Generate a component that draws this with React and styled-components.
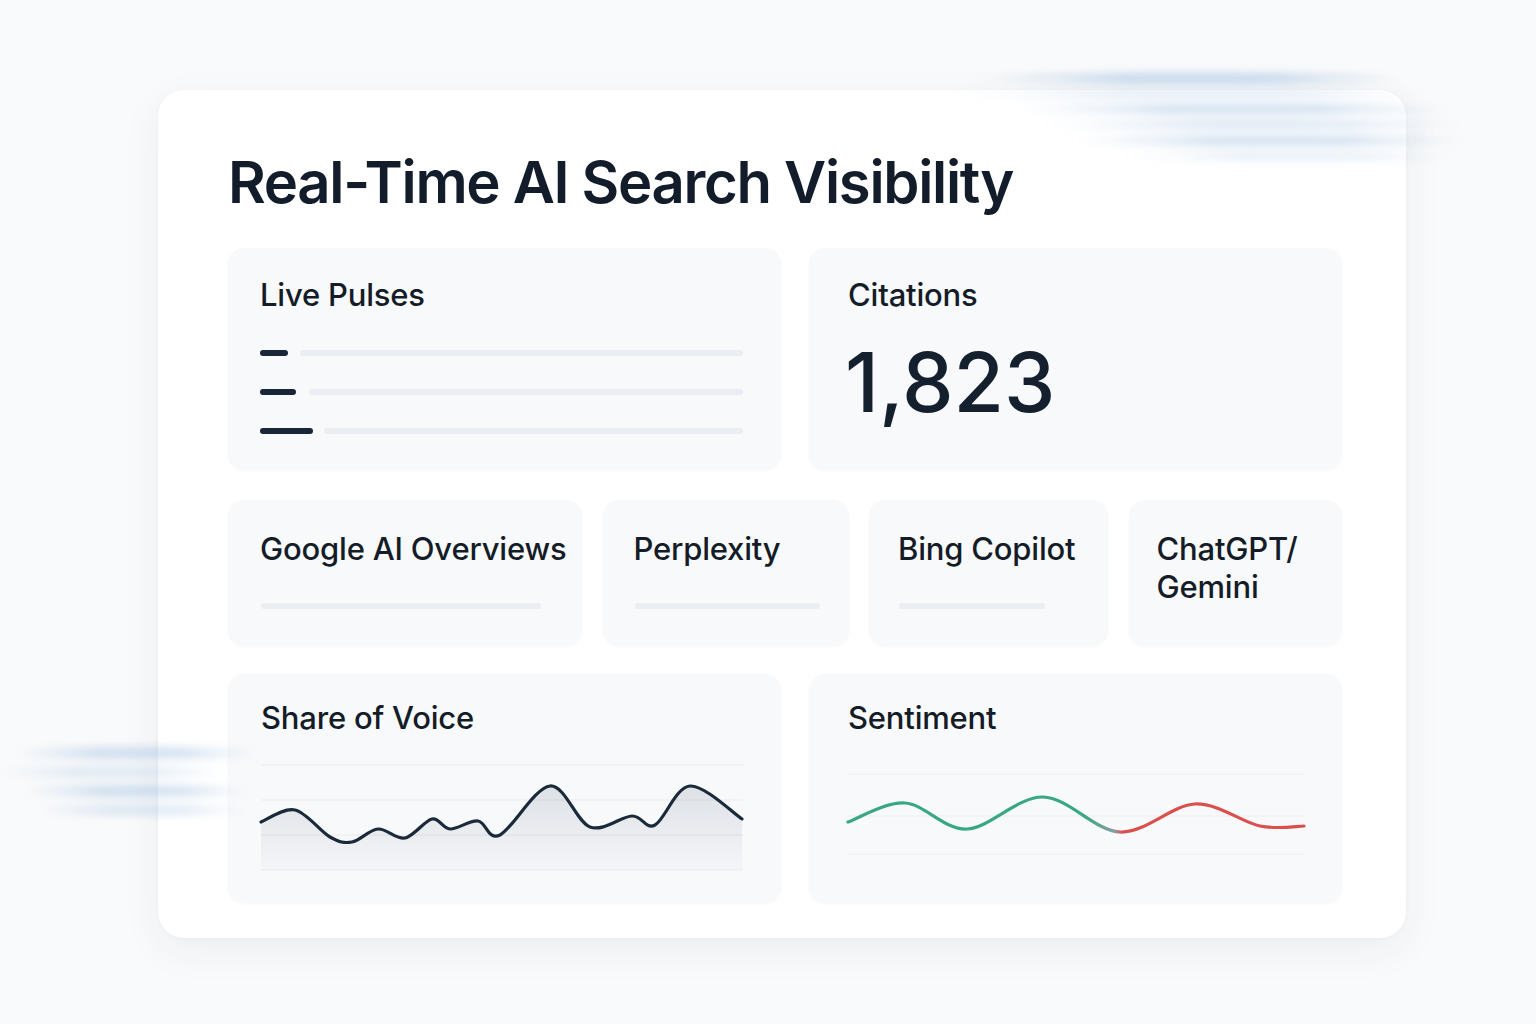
import React from 'react';
import styled, { createGlobalStyle } from 'styled-components';

const GlobalStyle = createGlobalStyle`
  html, body {
    margin: 0;
    padding: 0;
    background: #f9fafb;
  }
  body {
    font-family: Inter, "Noto Sans", "Liberation Sans", sans-serif;
    color: #131d2b;
  }
`;

const Page = styled.div`
  position: relative;
  width: 1536px;
  height: 1024px;
  box-sizing: border-box;
  padding: 90px 130px 0 158px;
  overflow: hidden;
`;

const Streaks = styled.div`
  position: absolute;
  left: ${(p) => p.$left}px;
  top: ${(p) => p.$top}px;
  width: ${(p) => p.$width}px;
  display: flex;
  flex-direction: column;
  gap: ${(p) => p.$gap}px;
  pointer-events: none;
  z-index: 2;
`;

const Streak = styled.div`
  height: ${(p) => p.$h}px;
  margin-left: ${(p) => p.$offset}px;
  width: ${(p) => p.$w}px;
  border-radius: 50%;
  background: linear-gradient(
    90deg,
    rgba(140, 178, 218, 0) 0%,
    rgba(140, 178, 218, ${(p) => p.$alpha}) 35%,
    rgba(140, 178, 218, ${(p) => p.$alpha}) 70%,
    rgba(140, 178, 218, 0) 100%
  );
  filter: blur(${(p) => p.$blur || 5}px);
`;

const Panel = styled.main`
  position: relative;
  z-index: 1;
  width: 1248px;
  height: 848px;
  box-sizing: border-box;
  background: #ffffff;
  border-radius: 26px;
  box-shadow: 0 12px 40px rgba(30, 45, 70, 0.06), 0 1px 4px rgba(30, 45, 70, 0.03);
  padding: 63px 64px 35px 70px;
  display: flex;
  flex-direction: column;
`;

const Title = styled.h1`
  margin: 0 0 37px;
  font-size: 58px;
  line-height: 58px;
  font-weight: 600;
  letter-spacing: -1.3px;
  color: #121c2a;
`;

const Row = styled.div`
  display: grid;
  grid-template-columns: ${(p) => p.$cols};
  column-gap: ${(p) => p.$gap}px;
  height: ${(p) => p.$height}px;
  margin-bottom: ${(p) => p.$mb || 0}px;
`;

const Card = styled.section`
  background: #f8f9fb;
  border-radius: 16px;
  box-shadow: 0 1px 3px rgba(30, 45, 70, 0.035);
  padding: ${(p) => p.$pt || 28}px 12px 0 ${(p) => p.$pl || 32}px;
  display: flex;
  flex-direction: column;
  min-width: 0;
`;

const Label = styled.div`
  font-size: 31px;
  line-height: 38px;
  font-weight: 500;
  letter-spacing: -0.2px;
  color: #141c28;
`;

const PulseList = styled.div`
  margin-top: 36px;
  display: flex;
  flex-direction: column;
  gap: 33px;
  width: 483px;
`;

const PulseRow = styled.div`
  display: flex;
  align-items: center;
  gap: ${(p) => p.$gap}px;
`;

const PulseTick = styled.span`
  width: ${(p) => p.$w}px;
  height: 6px;
  border-radius: 3px;
  background: #182638;
`;

const Track = styled.span`
  display: block;
  flex: ${(p) => (p.$w ? 'none' : '1')};
  width: ${(p) => (p.$w ? `${p.$w}px` : 'auto')};
  height: 6px;
  border-radius: 3px;
  background: #eaedf1;
`;

const BigNumber = styled.div`
  margin-top: 24px;
  font-size: 82px;
  line-height: 90px;
  font-weight: 500;
  letter-spacing: 0;
  color: #14202e;
  margin-left: -3px;
`;

const EngineTrack = styled(Track)`
  margin-top: 35px;
  margin-left: 1px;
`;

const Chart = styled.svg`
  display: block;
  margin-top: ${(p) => p.$mt}px;
  overflow: visible;
`;

const smoothPath = (pts) => {
  let d = `M ${pts[0][0]} ${pts[0][1]}`;
  for (let i = 0; i < pts.length - 1; i++) {
    const p0 = pts[i - 1] || pts[i];
    const p1 = pts[i];
    const p2 = pts[i + 1];
    const p3 = pts[i + 2] || p2;
    const c1x = p1[0] + (p2[0] - p0[0]) / 6;
    const c1y = p1[1] + (p2[1] - p0[1]) / 6;
    const c2x = p2[0] - (p3[0] - p1[0]) / 6;
    const c2y = p2[1] - (p3[1] - p1[1]) / 6;
    d += ` C ${c1x} ${c1y} ${c2x} ${c2y} ${p2[0]} ${p2[1]}`;
  }
  return d;
};

const voicePoints = [
  [0, 62], [34, 50], [69, 77], [91, 82], [117, 69], [144, 78], [171, 59],
  [189, 69], [217, 61], [239, 75], [289, 26], [329, 67], [371, 56],
  [394, 65], [429, 26], [481, 59],
];

const sentimentPoints = [
  [0, 52], [57, 33], [119, 59], [195, 27], [272, 62], [347, 34], [412, 56], [456, 56],
];

const VoiceChart = () => {
  const line = smoothPath(voicePoints);
  const area = `${line} L 481 110 L 0 110 Z`;
  return (
    <Chart width="482" height="112" viewBox="0 0 482 112" $mt={23}>
      <defs>
        <linearGradient id="voiceFill" x1="0" y1="0" x2="0" y2="1">
          <stop offset="0" stopColor="#2a3d58" stopOpacity="0.13" />
          <stop offset="1" stopColor="#2a3d58" stopOpacity="0.02" />
        </linearGradient>
      </defs>
      {[5, 40, 75, 110].map((y) => (
        <line key={y} x1="0" x2="482" y1={y} y2={y} stroke="#e8ebef" strokeWidth="1.2" />
      ))}
      <path d={area} fill="url(#voiceFill)" />
      <path d={line} fill="none" stroke="#1b2a3b" strokeWidth="3.2" strokeLinecap="round" strokeLinejoin="round" />
    </Chart>
  );
};

const SentimentChart = () => (
  <Chart width="458" height="88" viewBox="0 0 458 88" $mt={33}>
    <defs>
      <linearGradient id="moodStroke" x1="0" y1="0" x2="456" y2="0" gradientUnits="userSpaceOnUse">
        <stop offset="0" stopColor="#3aa784" />
        <stop offset="0.52" stopColor="#3aa784" />
        <stop offset="0.585" stopColor="#8a9ea3" />
        <stop offset="0.6" stopColor="#d9504c" />
        <stop offset="1" stopColor="#d9504c" />
      </linearGradient>
    </defs>
    {[4, 46, 84].map((y) => (
      <line key={y} x1="0" x2="456" y1={y} y2={y} stroke="#eceef1" strokeWidth="1.2" />
    ))}
    <path d={smoothPath(sentimentPoints)} fill="none" stroke="url(#moodStroke)" strokeWidth="3.2" strokeLinecap="round" />
  </Chart>
);

const pulses = [
  { tick: 28, gap: 12 },
  { tick: 36, gap: 13 },
  { tick: 53, gap: 11 },
];

const engines = [
  { name: 'Google AI Overviews', bar: 280, pl: 32 },
  { name: 'Perplexity', bar: 185, pl: 31 },
  { name: 'Bing Copilot', bar: 146, pl: 29 },
  { name: 'ChatGPT/ Gemini', bar: 0, pl: 28 },
];

const topStreaks = [
  { h: 9, w: 440, offset: 40, alpha: 0.55 },
  { h: 6, w: 490, offset: 20, alpha: 0.35 },
  { h: 8, w: 450, offset: 80, alpha: 0.5 },
  { h: 7, w: 430, offset: 110, alpha: 0.4 },
  { h: 9, w: 400, offset: 140, alpha: 0.45 },
  { h: 6, w: 340, offset: 190, alpha: 0.3 },
];

const sideStreaks = [
  { h: 10, w: 250, offset: 30, alpha: 0.45 },
  { h: 8, w: 240, offset: 10, alpha: 0.3 },
  { h: 10, w: 230, offset: 40, alpha: 0.45 },
  { h: 8, w: 220, offset: 50, alpha: 0.35 },
];

const App = () => (
  <>
    <GlobalStyle />
    <Page>
      <Streaks $left={930} $top={74} $width={560} $gap={8}>
        {topStreaks.map((s, i) => (
          <Streak key={i} $h={s.h} $w={s.w} $offset={s.offset} $alpha={s.alpha} />
        ))}
      </Streaks>
      <Streaks $left={-20} $top={748} $width={260} $gap={10}>
        {sideStreaks.map((s, i) => (
          <Streak key={i} $h={s.h} $w={s.w} $offset={s.offset} $alpha={s.alpha} />
        ))}
      </Streaks>
      <Panel>
        <Title>Real-Time AI Search Visibility</Title>
        <Row $cols="553px 1fr" $gap={28} $height={222} $mb={30}>
          <Card>
            <Label>Live Pulses</Label>
            <PulseList>
              {pulses.map((p) => (
                <PulseRow key={p.tick} $gap={p.gap}>
                  <PulseTick $w={p.tick} />
                  <Track />
                </PulseRow>
              ))}
            </PulseList>
          </Card>
          <Card $pl={39}>
            <Label>Citations</Label>
            <BigNumber>1,823</BigNumber>
          </Card>
        </Row>
        <Row $cols="354px 246px 239px 1fr" $gap={20.5} $height={146} $mb={28}>
          {engines.map((e) => (
            <Card key={e.name} $pl={e.pl} $pt={30}>
              <Label>{e.name}</Label>
              {e.bar > 0 && <EngineTrack $w={e.bar} />}
            </Card>
          ))}
        </Row>
        <Row $cols="553px 1fr" $gap={28} $height={229}>
          <Card $pl={33} $pt={25}>
            <Label>Share of Voice</Label>
            <VoiceChart />
          </Card>
          <Card $pl={39} $pt={25}>
            <Label>Sentiment</Label>
            <SentimentChart />
          </Card>
        </Row>
      </Panel>
    </Page>
  </>
);

export default App;
